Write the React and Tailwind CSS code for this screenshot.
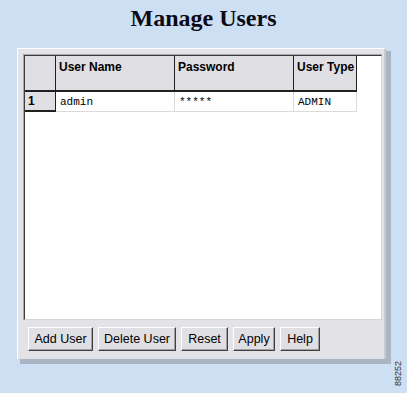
export default function App() {
  const headers = [
    { label: "User Name", w: "w-[119px]" },
    { label: "Password", w: "w-[119px]" },
    { label: "User Type", w: "w-[63px]" },
  ];
  const row = ["admin", "*****", "ADMIN"];
  const buttons = [
    { label: "Add User", w: "w-[65px]" },
    { label: "Delete User", w: "w-[78px]" },
    { label: "Reset", w: "w-[47px]" },
    { label: "Apply", w: "w-[42px]" },
    { label: "Help", w: "w-[40px]" },
  ];

  return (
    <div className="relative w-[407px] h-[393px] overflow-hidden bg-[#cddff3]">
      <h1 className="pt-[4px] h-[48px] text-center text-[24px] font-bold leading-[28px] text-[#0a0a14] font-['Liberation_Serif',serif]">
        Manage Users
      </h1>

      {/* panel with bevel + shadow */}
      <div className="ml-[17px] w-[374px] h-[316px] flex">
        <div className="flex flex-col w-[369px]">
          <div className="h-[311px] border-t border-l border-white bg-[#e3e2e6] pl-[5px] pt-[5px] pr-[2px] border-r-2 border-r-[#c9c8cc]">
            {/* table box */}
            <div className="w-[359px] h-[266px] border-t border-l border-[#a6a6a6] bg-white">
              <div className="h-full border-t border-l border-[#3c3c3c] border-r border-r-[#d6d6d6] border-b border-b-[#d6d6d6]">
                <div className="flex h-[36px]">
                  <div className="w-[31px] bg-[#e0dfe3] border-r border-b-2 border-[#202020]" />
                  {headers.map((h) => (
                    <div
                      key={h.label}
                      className={`${h.w} bg-[#e0dfe3] border-r border-b-2 border-[#202020] pl-[3px] pt-[4px] text-[12px] font-bold leading-[14px] text-black font-['Liberation_Sans',Arial,sans-serif]`}
                    >
                      {h.label}
                    </div>
                  ))}
                </div>
                <div className="flex h-[20px]">
                  <div className="w-[31px] bg-[#e0dfe3] border-r border-b-2 border-[#202020] pl-[3px] text-[12px] font-bold leading-[19px] font-['Liberation_Sans',Arial,sans-serif]">
                    1
                  </div>
                  {row.map((c, i) => (
                    <div
                      key={i}
                      className={`${headers[i].w} border-r border-b border-[#dadada] pl-[4px] text-[11px] leading-[20px] text-black font-['Liberation_Mono','Courier_New',monospace]`}
                    >
                      {c}
                    </div>
                  ))}
                </div>
              </div>
            </div>
            {/* buttons */}
            <div className="flex gap-[5px] pt-[7px] pl-[5px]">
              {buttons.map((b) => (
                <div
                  key={b.label}
                  className={`${b.w} h-[24px] flex items-center justify-center bg-[#e0dfe3] border-t border-l border-white border-r border-b border-r-[#404040] border-b-[#404040] shadow-[inset_-1px_-1px_0_#a0a0a0] text-[12.5px] text-black font-['Liberation_Sans',Arial,sans-serif]`}
                >
                  {b.label}
                </div>
              ))}
            </div>
          </div>
          <div className="h-[5px] ml-[3px] bg-[#aab5c3]" />
        </div>
        <div className="w-[5px] mt-[3px] h-[313px] bg-[#aab5c3]" />
      </div>

      <div className="absolute left-[393px] top-[357px] w-[12px] h-[32px] flex items-center justify-center">
        <span className="-rotate-90 text-[9px] leading-none text-[#333] font-['Liberation_Sans',Arial,sans-serif] whitespace-nowrap">
          88252
        </span>
      </div>
    </div>
  );
}
